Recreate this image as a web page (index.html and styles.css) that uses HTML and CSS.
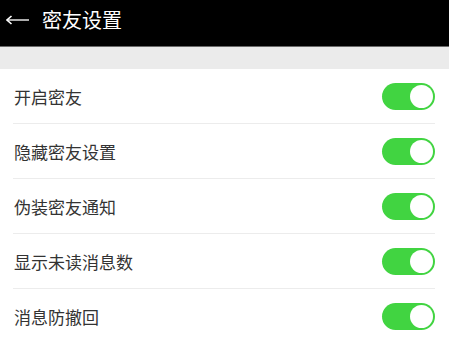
FILE: index.html
```html
<!DOCTYPE html>
<html lang="zh">
<head>
<meta charset="utf-8">
<link rel="stylesheet" href="styles.css">
</head>
<body>
<header class="bar">
  <svg class="back" width="24" height="10" viewBox="0 0 24 10">
    <path d="M1 5 H23" stroke="#e6e6e6" stroke-width="1.5" fill="none"/>
    <path d="M5.5 1 L1 5 L5.5 9" stroke="#ffffff" stroke-width="1.6" fill="none" stroke-linejoin="miter"/>
  </svg>
  <span class="title">密友设置</span>
</header>
<div class="gap"></div>
<ul class="list">
  <li class="row"><span class="label">开启密友</span><span class="switch"><span class="knob"></span></span></li>
  <li class="row"><span class="label">隐藏密友设置</span><span class="switch"><span class="knob"></span></span></li>
  <li class="row"><span class="label">伪装密友通知</span><span class="switch"><span class="knob"></span></span></li>
  <li class="row"><span class="label">显示未读消息数</span><span class="switch"><span class="knob"></span></span></li>
  <li class="row"><span class="label">消息防撤回</span><span class="switch"><span class="knob"></span></span></li>
</ul>
</body>
</html>
```
FILE: styles.css
```css
html, body {
  margin: 0;
  padding: 0;
  background: #ffffff;
  font-family: "Noto Sans CJK SC", "Noto Sans", sans-serif;
}
.bar {
  height: 46px;
  background: #000000;
  border-bottom: 1px solid #6a6a6a;
  display: flex;
  align-items: center;
  color: #ffffff;
}
.back {
  margin-left: 6px;
  margin-right: 12px;
  margin-top: -6px;
}
.title {
  font-size: 20px;
  line-height: 1;
  margin-top: -6px;
}
.gap {
  height: 22px;
  background: #ebebeb;
}
.list {
  list-style: none;
  margin: 0;
  padding: 0 14px 0 13px;
}
.row {
  height: 54px;
  border-bottom: 1px solid #ececec;
  display: flex;
  align-items: center;
  justify-content: space-between;
  padding-left: 1px;
}
.label {
  font-size: 17px;
  color: #333333;
  line-height: 1;
}
.switch {
  width: 53px;
  height: 27px;
  border-radius: 14px;
  background: #41d441;
  display: flex;
  align-items: center;
  justify-content: flex-end;
  padding-right: 2px;
  box-sizing: border-box;
}
.knob {
  width: 23px;
  height: 23px;
  border-radius: 50%;
  background: #ffffff;
}
```
